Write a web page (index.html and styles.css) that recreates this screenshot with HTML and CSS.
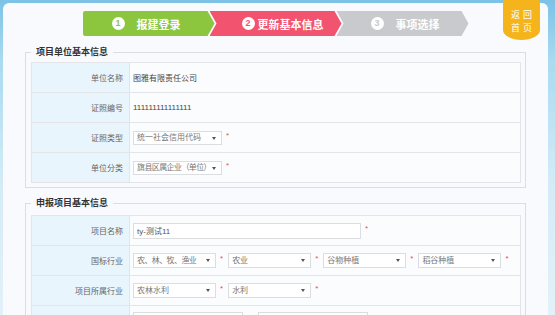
FILE: index.html
```html
<!DOCTYPE html>
<html lang="zh-CN">
  <head>
    <meta charset="UTF-8" />
    <meta name="viewport" content="width=device-width, initial-scale=1.0" />
    <title>更新基本信息</title>
    <link rel="stylesheet" href="styles.css">
  </head>
  <body>
    <div class="page">
      <a class="back-home" href="#">返回<br />首页</a>

      <div class="steps">
        <div class="step step-done">
          <span class="step-num">1</span><span class="step-text">报建登录</span>
        </div>
        <div class="step step-active">
          <span class="step-num">2</span><span class="step-text">更新基本信息</span>
        </div>
        <div class="step step-todo">
          <span class="step-num">3</span><span class="step-text">事项选择</span>
        </div>
      </div>

      <div class="box">
        <div class="box-title">项目单位基本信息</div>
        <table class="info-table">
          <tr>
            <th>单位名称</th>
            <td>图雅有限责任公司</td>
          </tr>
          <tr>
            <th>证照编号</th>
            <td>111111111111111</td>
          </tr>
          <tr>
            <th>证照类型</th>
            <td>
              <span class="sel sel-wide"><select><option>统一社会信用代码</option></select></span><span class="req">*</span>
            </td>
          </tr>
          <tr>
            <th>单位分类</th>
            <td>
              <span class="sel sel-wide sel-tight"><select><option>旗县区属企业（单位）</option></select></span><span class="req">*</span>
            </td>
          </tr>
        </table>
      </div>

      <div class="box box-project">
        <div class="box-title">申报项目基本信息</div>
        <table class="info-table">
          <tr>
            <th>项目名称</th>
            <td>
              <input type="text" class="text-long" value="ty-测试11" /><span class="req">*</span>
            </td>
          </tr>
          <tr>
            <th>国标行业</th>
            <td>
              <span class="sel sel-tight"><select><option>农、林、牧、渔业</option></select></span><span class="req">*</span><span class="sel"><select><option>农业</option></select></span><span class="req">*</span><span class="sel"><select><option>谷物种植</option></select></span><span class="req">*</span><span class="sel"><select><option>稻谷种植</option></select></span><span class="req">*</span>
            </td>
          </tr>
          <tr>
            <th>项目所属行业</th>
            <td>
              <span class="sel"><select><option>农林水利</option></select></span><span class="req">*</span><span class="sel"><select><option>水利</option></select></span><span class="req">*</span>
            </td>
          </tr>
          <tr>
            <th></th>
            <td class="cell-top">
              <input type="text" class="text-short" /><input type="text" class="text-short" />
            </td>
          </tr>
        </table>
      </div>
    </div>
  </body>
</html>
```

FILE: styles.css
```css
body {
  margin: 0;
  font-family: "Liberation Sans", "Noto Sans CJK SC", sans-serif;
  background: linear-gradient(to bottom, #7cc2e6 0px, #a9daf0 60px, #d3ebf7 180px, #e3f1f9 315px);
  color: #444;
  overflow: hidden;
}

.page {
  position: relative;
  margin: 3px 7px 0 3px;
  padding-bottom: 40px;
  background: #f9fafd;
  border-radius: 6px 6px 0 0;
}

.back-home {
  position: absolute;
  top: -3px;
  right: 8px;
  width: 37px;
  height: 40px;
  box-sizing: border-box;
  padding: 9px 0 0 3px;
  background: #f5b41b;
  border-radius: 0 0 50% 50% / 0 0 10px 10px;
  color: #fff;
  font-size: 9px;
  line-height: 13px;
  letter-spacing: 3px;
  text-align: center;
  text-decoration: none;
}

/* step bar */
.steps {
  display: flex;
  justify-content: center;
  padding-top: 8px;
}

.step {
  display: flex;
  align-items: center;
  width: 132px;
  height: 25px;
  padding-left: 29px;
  box-sizing: border-box;
  color: #fff;
  font-size: 11px;
  font-weight: bold;
  clip-path: polygon(0 0, calc(100% - 7px) 0, 100% 50%, calc(100% - 7px) 100%, 0 100%, 7px 50%);
}

.step + .step {
  margin-left: -5px;
}

.step-done {
  background: #8cc63f;
  clip-path: polygon(0 0, calc(100% - 7px) 0, 100% 50%, calc(100% - 7px) 100%, 0 100%);
  border-radius: 2px 0 0 2px;
}

.step-active {
  background: #f2546f;
  padding-left: 32px;
}

.step-todo {
  background: #c9cacd;
  padding-left: 34px;
}

.step-num {
  width: 13px;
  height: 13px;
  margin-right: 12px;
  border-radius: 50%;
  background: #fff;
  font-family: "Liberation Sans", sans-serif;
  font-size: 9px;
  line-height: 13px;
  text-align: center;
}

.step-done .step-num {
  color: #8cc63f;
}

.step-active .step-num {
  color: #f2546f;
  margin-right: 3px;
}

.step-todo .step-num {
  color: #c9cacd;
}

/* sections */
.box {
  margin: 16px 22px 0;
  padding: 0 4px 4px 5px;
  border: 1px solid #dcdde0;
}

.box-project {
  margin-top: 15px;
}

.box-title {
  display: table;
  margin: -9px 0 2px 0;
  padding: 0 5px;
  background: #f9fafd;
  font-size: 9px;
  font-weight: bold;
  line-height: 16px;
  color: #333;
}

.box-project .box-title {
  margin-bottom: 4px;
}

.info-table {
  width: 100%;
  border-collapse: collapse;
  border: 1px solid #e3e5e8;
  font-size: 8px;
}

.info-table th,
.info-table td {
  height: 29px;
  border-top: 1px solid #e3e5e8;
  padding: 0;
}

.info-table th {
  width: 91px;
  padding-right: 6px;
  background: #e8f5fd;
  border-right: 1px solid #dfe6eb;
  color: #666;
  font-weight: normal;
  text-align: right;
}

.info-table td {
  padding-left: 3px;
  background: #fbfcfe;
  color: #444;
  white-space: nowrap;
}

.info-table .cell-top {
  vertical-align: top;
  padding-top: 6px;
}

.sel {
  position: relative;
  display: inline-block;
  vertical-align: middle;
}

.sel::after {
  content: "";
  position: absolute;
  right: 6px;
  top: 6px;
  border-left: 2px solid transparent;
  border-right: 2px solid transparent;
  border-top: 3px solid #555;
}

select {
  appearance: none;
  -webkit-appearance: none;
  display: block;
  width: 83px;
  height: 15px;
  margin: 0;
  padding: 0 2px 0 3px;
  border: 1px solid #dcdde0;
  border-radius: 0;
  background: #fff;
  font-family: "Liberation Sans", "Noto Sans CJK SC", sans-serif;
  font-size: 8px;
  color: #777;
  outline: none;
}

.sel-wide select {
  width: 89px;
  height: 14px;
}

.sel-tight select {
  letter-spacing: -0.6px;
}

input[type="text"] {
  box-sizing: border-box;
  height: 16px;
  margin: 0;
  padding: 0 3px;
  border: 1px solid #dcdde0;
  background: #fff;
  font-family: "Liberation Sans", "Noto Sans CJK SC", sans-serif;
  font-size: 8px;
  color: #555;
  vertical-align: middle;
  outline: none;
}

.text-long {
  width: 228px;
}

.text-short {
  width: 110px;
  margin-right: 15px !important;
}

.req {
  display: inline-block;
  margin: 0 5px 0 4px;
  color: #f04b4b;
  font-size: 8px;
  vertical-align: middle;
  position: relative;
  top: -2px;
}
```
